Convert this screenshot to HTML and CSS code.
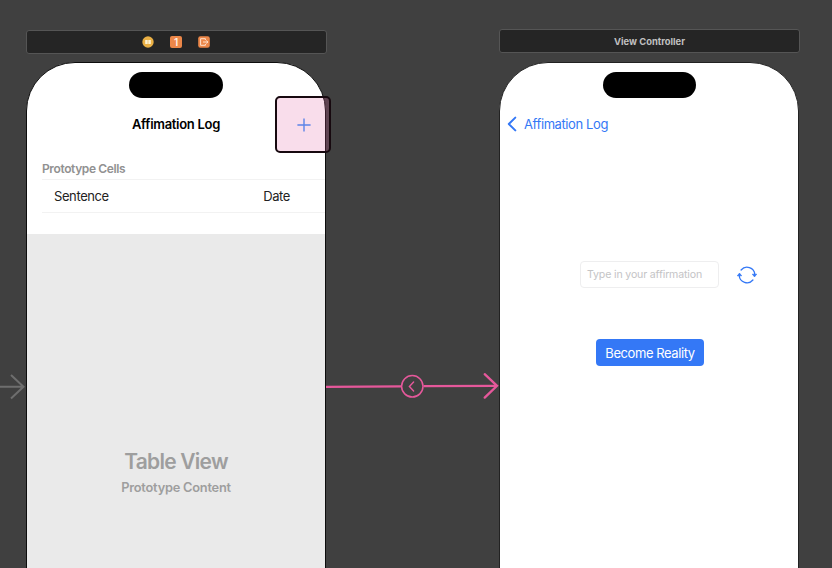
FILE: index.html
```html
<!DOCTYPE html>
<html lang="en">
<head>
<meta charset="utf-8">
<title>Storyboard</title>
<link rel="stylesheet" href="styles.css">
</head>
<body>
<main class="canvas">
  <section class="scene scene-log">
    <header class="dock">
      <svg class="dock-icon" viewBox="0 0 12 12"><circle cx="6" cy="6" r="5.7" fill="#eab045"/><path d="M3.2 4h2.5v4H3.2zM6.3 4h2.5v4H6.3z" fill="#fff3d2"/></svg>
      <span class="responder">1</span>
      <svg class="dock-icon" viewBox="0 0 12 12"><rect x=".2" y=".2" width="11.6" height="11.6" rx="2.2" fill="#ec8749"/><path d="M7.4 4V2.7H2.6v6.6h4.8V8M5 6h4.8M8.3 4.4 9.9 6 8.3 7.6" fill="none" stroke="#ffe1cd" stroke-width="1"/></svg>
    </header>
    <div class="phone">
      <div class="island"></div>
      <h1 class="nav-title"><span>Affimation Log</span></h1>
      <h2 class="section-title"><span>Prototype Cells</span></h2>
      <div class="cell"><span class="sentence">Sentence</span><span class="date">Date</span></div>
      <div class="table">
        <p class="table-title">Table View</p>
        <p class="table-sub">Prototype Content</p>
      </div>
    </div>
    <div class="highlight">
      <svg viewBox="0 0 14 14"><path d="M7 .4v13.2M.4 7h13.2" stroke="#5c84e8" stroke-width="1.4"/></svg>
    </div>
  </section>

  <section class="scene scene-detail">
    <header class="dock"><span class="dock-title">View Controller</span></header>
    <div class="phone">
      <div class="island"></div>
      <nav class="back">
        <svg viewBox="0 0 10 16"><path d="M8.3 1.6 1.8 8l6.5 6.4" fill="none" stroke="#3478f6" stroke-width="2" stroke-linecap="round" stroke-linejoin="round"/></svg>
        <span>Affimation Log</span>
      </nav>
      <div class="entry">
        <div class="field"><span>Type in your affirmation</span></div>
        <svg class="refresh" viewBox="0 0 20 18"><g fill="none" stroke="#3478f6" stroke-width="1.3" stroke-linecap="round"><path d="M4.1 4A7.8 7.8 0 0 1 17.8 8.5M15.9 14A7.8 7.8 0 0 1 2.2 9.5"/></g><path d="M15.3 8.2h4.4l-2.2 2.7zM.3 9.8h4.4l-2.2-2.7z" fill="#3478f6" stroke="#3478f6" stroke-width=".7" stroke-linejoin="round"/></svg>
      </div>
      <div class="button"><span>Become Reality</span></div>
    </div>
  </section>

  <svg class="connections" viewBox="0 0 832 568">
    <path d="M0 386.7h23M11 375l12.5 11.7L11 398.5" fill="none" stroke="#6e6e6e" stroke-width="2"/>
    <g fill="none" stroke="#e6589b" stroke-width="2.3">
      <path d="M326 386.8 401.5 386.3M423.5 386.2 496 385.8"/>
      <path d="M484.7 374.2 497 385.8 484.7 397.6" stroke-linecap="round"/>
      <circle cx="412.3" cy="386.3" r="10.7" stroke-width="1.5"/>
      <path d="M413.6 382.1 409.4 386.5 413.6 391" stroke-width="1.4" stroke-linecap="round"/>
    </g>
  </svg>
</main>
</body>
</html>
```
FILE: styles.css
```css
* { box-sizing: border-box; margin: 0; }
body { font-family: Inter, "Liberation Sans", sans-serif; font-size: 13px; }
span { white-space: nowrap; }
svg { display: block; }
.canvas { position: relative; width: 832px; height: 568px; overflow: hidden; background: #404040; }
.scene { position: absolute; width: 301px; height: 540px; display: flex; flex-direction: column; }
.scene-log { left: 26px; top: 30px; }
.scene-detail { left: 499px; top: 29px; }
.dock { display: flex; align-items: center; justify-content: center; gap: 16px; height: 24px; flex: none; background: #252525; border: 1px solid #555; border-radius: 3px; }
.scene-log .dock { padding-right: 1px; }
.dock-icon { width: 12px; height: 12px; }
.responder { width: 12px; height: 12px; border-radius: 2px; background: #ec8749; color: #fff0e5; font-size: 10px; font-weight: 600; line-height: 12px; text-align: center; }
.dock-title { color: #c0c0c0; font-size: 9.4px; font-weight: 700; }
.phone { width: 300px; height: 600px; flex: none; margin-top: 8px; background: #fff; border: 1px solid #0d0d0d; border-radius: 49px 49px 0 0; overflow: hidden; display: flex; flex-direction: column; }
.scene-detail .phone { margin-top: 9px; border-color: #222; }
.island { width: 94px; height: 26px; flex: none; margin: 9px auto 0 102px; border-radius: 13px; background: #000; }
.scene-detail .island { width: 93px; margin-left: 103px; }
.nav-title { height: 30px; margin-top: 11px; line-height: 30px; font-size: 13px; font-weight: 600; text-align: center; color: #000; letter-spacing: -.3px; }
.section-title { margin-top: 21px; padding-left: 15px; height: 18px; line-height: 18px; font-size: 12px; font-weight: 600; color: #919191; letter-spacing: -.38px; }
.cell { display: flex; justify-content: space-between; align-items: center; height: 34px; margin: 1px 0 21px 15px; padding: 0 35px 0 12px; border: solid #f2f2f2; border-width: 1px 0; color: #222; }
.sentence, .date { letter-spacing: -.4px; }
.table { flex: 1; background: #eaeaea; color: #9e9e9e; text-align: center; padding-top: 214px; }
.table-title { font-size: 21px; line-height: 28px; font-weight: 600; letter-spacing: -.75px; }
.table-sub { margin-top: 3px; font-size: 12.8px; line-height: 18px; font-weight: 600; letter-spacing: -.22px; }
.highlight { position: absolute; left: 249px; top: 66px; width: 56px; height: 57px; border: 2px solid #17090f; border-radius: 5px; background: rgba(226, 84, 154, .2); display: flex; align-items: center; justify-content: center; padding-left: 2px; }
.highlight svg { width: 14px; height: 14px; }
.back { display: flex; align-items: center; gap: 7px; height: 30px; margin: 11px 0 0 7px; color: #3478f6; letter-spacing: -.4px; }
.back svg { width: 10px; height: 16px; }
.entry { display: flex; align-items: center; gap: 18px; margin: 122px 0 0 80px; }
.field { width: 139px; height: 27px; border: 1px solid #eeeeef; border-radius: 4px; padding-left: 6px; line-height: 26px; color: #c4c4c6; font-size: 10.6px; letter-spacing: -.16px; }
.refresh { width: 20px; height: 18px; }
.button { display: flex; align-items: center; justify-content: center; width: 108px; height: 27px; margin: 51px 0 0 96px; border-radius: 4px; background: #3478f6; color: #fff; letter-spacing: -.42px; }
.connections { position: absolute; inset: 0; width: 832px; height: 568px; }
```
